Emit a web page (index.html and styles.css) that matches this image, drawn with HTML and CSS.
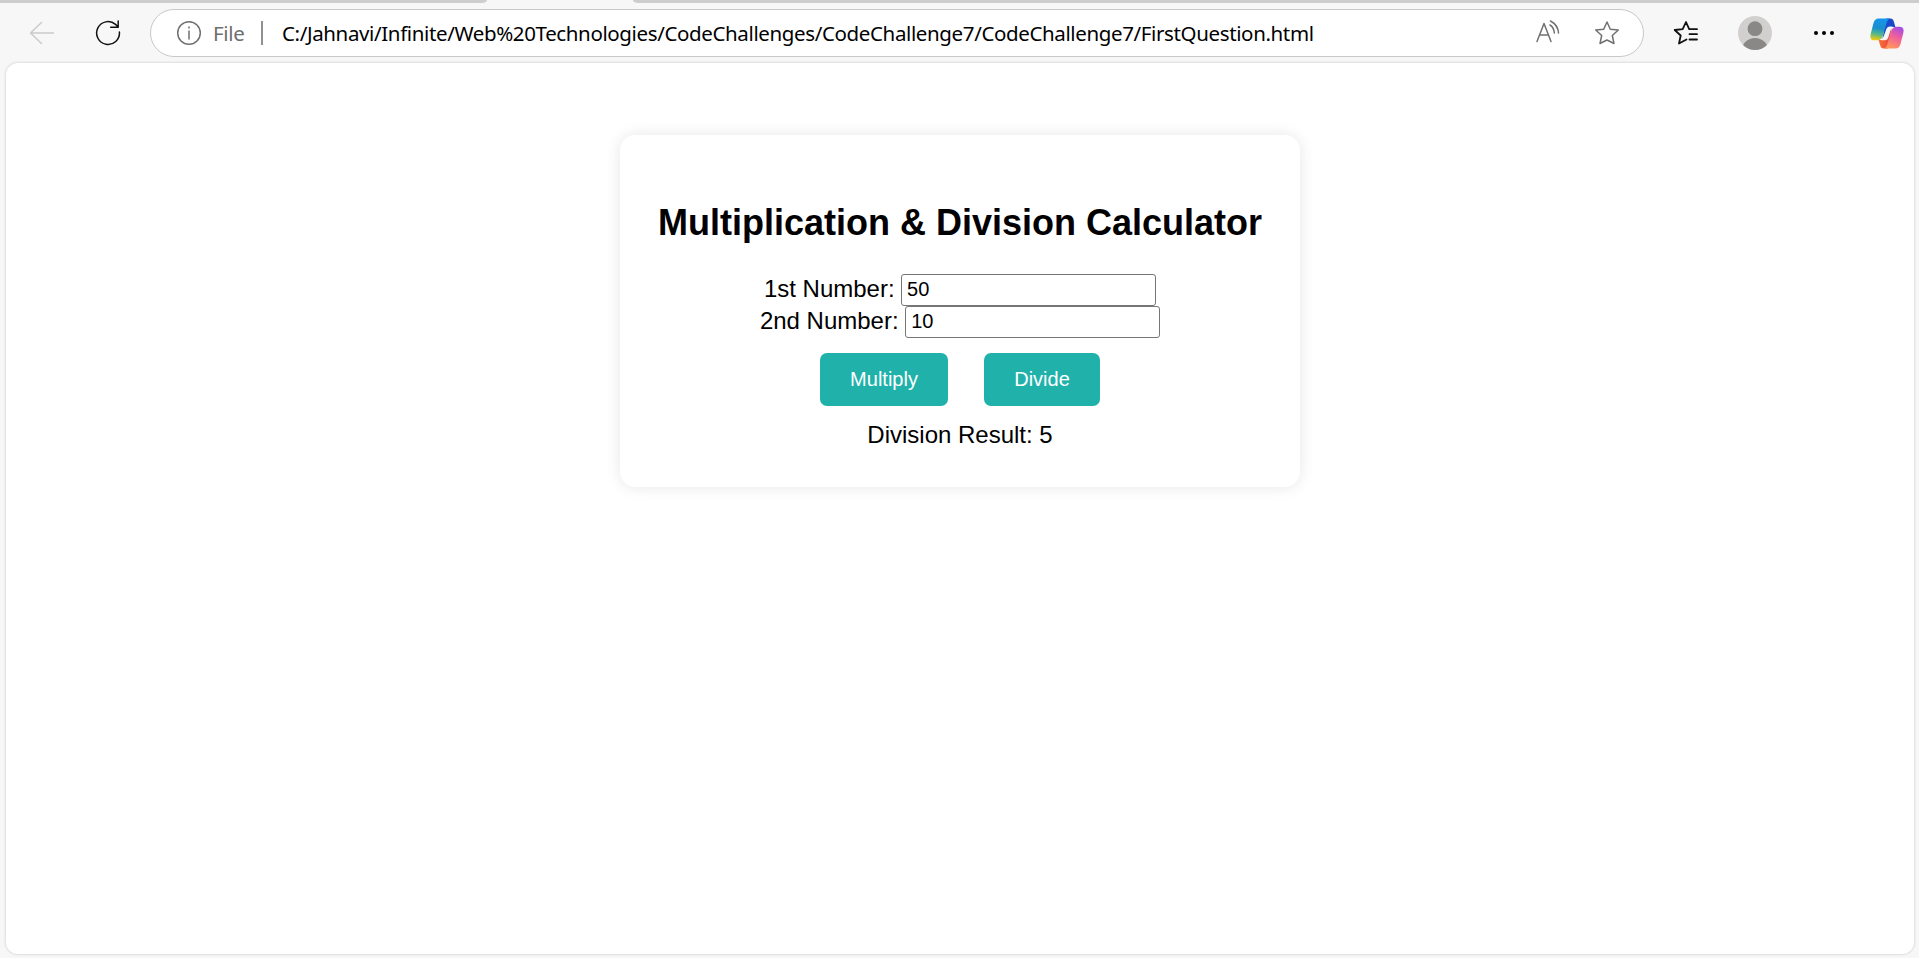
FILE: index.html
```html
<!DOCTYPE html>
<html lang="en">
<head>
<meta charset="utf-8">
<title>Multiplication &amp; Division Calculator</title>
<link rel="stylesheet" href="styles.css">
</head>
<body>
<div class="tabs"><div class="tab-left"></div><div class="tab-right"></div></div>
<header class="toolbar">
  <svg class="icon back" width="26" height="24" viewBox="0 0 26 24"><path d="M24.5 12H1.5M12.5 1.5L1.5 12l11 10.5"/></svg>
  <svg class="icon reload" width="26" height="26" viewBox="0 0 26 26"><path d="M24.4 12A11.4 11.4 0 1 1 20.5 4.4L23 6.8M23.2 1v6.300h-7.500"/></svg>
  <div class="address">
    <svg class="icon info" width="26" height="26" viewBox="0 0 26 26"><circle cx="13" cy="13" r="11.300"/><path d="M13 11v8M13 7v1"/></svg>
    <span class="scheme">File</span>
    <span class="divider"></span>
    <span class="url">C:/Jahnavi/Infinite/Web%20Technologies/CodeChallenges/CodeChallenge7/CodeChallenge7/FirstQuestion.html</span>
    <svg class="icon read" width="24" height="24" viewBox="0 0 24 24"><path d="M1 21.500L8 3.500l7 18M3.700 15h8.600M14 5q4 2.500 4.300 8M14.500 1q7.500 4 8 12"/></svg>
    <svg class="icon star" width="26" height="26" viewBox="0 0 26 26"><path d="M13 2l3.300 7.200 8 .8-6 5.500 1.700 8L13 20l-7 3.500 1.700-8-6-5.500 8-.8z"/></svg>
  </div>
  <svg class="icon favorites" width="26" height="26" viewBox="0 0 26 26"><path d="M24 9.200h-7.800L13 2 9.700 9.200l-8 .8 6 5.500-1.700 8 7.500-4M16.500 14.200H24M16.500 19.500H24"/></svg>
  <svg class="avatar" width="34" height="34" viewBox="0 0 34 34"><defs><clipPath id="disc"><circle cx="17" cy="17" r="17"/></clipPath></defs><g clip-path="url(#disc)"><path fill="#d2d0ce" d="M0 0h34v34H0z"/><circle cx="17" cy="12.700" r="7.400" fill="#8a8886"/><ellipse cx="17" cy="34" rx="13" ry="12" fill="#8a8886"/></g></svg>
  <svg class="more" width="22" height="6" viewBox="0 0 22 6"><circle cx="3" cy="3" r="2"/><circle cx="11" cy="3" r="2"/><circle cx="19" cy="3" r="2"/></svg>
  <svg class="copilot" width="34" height="31" viewBox="0 0 34 31">
    <defs>
      <linearGradient id="sea" x1=".5" y1="0" x2=".35" y2="1"><stop offset="0" stop-color="#1496ec"/><stop offset=".45" stop-color="#1b8fce"/><stop offset=".72" stop-color="#52b88a"/><stop offset="1" stop-color="#f2cc0b"/></linearGradient>
      <linearGradient id="sunset" x1=".8" y1="0" x2=".4" y2="1"><stop offset="0" stop-color="#a14ce8"/><stop offset=".45" stop-color="#ee5e9e"/><stop offset="1" stop-color="#ff965a"/></linearGradient>
      <linearGradient id="navy"><stop offset="0" stop-color="#1c4fd0"/><stop offset="1" stop-color="#1946c4"/></linearGradient>
      <linearGradient id="flame"><stop offset="0" stop-color="#f8733a"/><stop offset="1" stop-color="#e8403a"/></linearGradient>
    </defs>
    <path fill="url(#navy)" d="M16 .5h4.500q2.500 0 3.300 3l1.600 5.500h-4q-3 0-4 3l-5 9z"/>
    <path fill="url(#flame)" d="M18 30.500h-4.500q-2.500 0-3.300-3L8.600 22h4q3 0 4-3l5-9z"/>
    <path fill="url(#sea)" d="M8.500.5H20q-2.500.8-3.600 5l-3.500 12q-1.300 4.800-5.500 4.800H4.500Q-.7 22.300.7 16L3.500 5Q4.800.5 8.500.5z"/>
    <path fill="url(#sunset)" d="M25.500 30.500H14q2.500-.8 3.600-5l3.500-12q1.300-4.800 5.500-4.800h2.900q5.200 0 3.800 6.300L30.500 26q-1.300 4.500-5 4.500z"/>
    <path fill="#f7f7f7" d="M16.200 11.500q1-2.900 3.800-2.900h2.600q-1.700 1.500-2.300 4.200l-2 6.800q-.8 2.600-3.200 2.600h-4q1.700-1.200 2.300-3z"/>
  </svg>
</header>
<main class="page">
  <section class="card">
    <h2 class="title">Multiplication &amp; Division Calculator</h2>
    <div class="row"><label class="caption" for="first">1st Number:</label><input class="number" id="first" type="text" value="50"></div>
    <div class="row"><label class="caption" for="second">2nd Number:</label><input class="number" id="second" type="text" value="10"></div>
    <div class="actions"><button class="action multiply">Multiply</button><button class="action divide">Divide</button></div>
    <div class="result">Division Result: 5</div>
  </section>
</main>
</body>
</html>
```

FILE: styles.css
```css
* { box-sizing: border-box; }
body {
  margin: 0;
  height: 958px;
  overflow: hidden;
  display: flex;
  flex-direction: column;
  background: #f7f7f7;
  font-family: "Liberation Sans", Arial, sans-serif;
}
.tabs { display: flex; justify-content: space-between; height: 3px; flex: none; }
.tab-left { width: 487px; background: #cdcdcd; border-bottom-right-radius: 5px 3px; }
.tab-right { width: 1286px; background: #cdcdcd; border-bottom-left-radius: 5px 3px; }
.toolbar { display: flex; align-items: center; height: 60px; flex: none; padding: 0 15px 0 29px; }
.icon { flex: none; fill: none; stroke: #707070; stroke-width: 1.5; stroke-linejoin: round; stroke-linecap: round; }
.back { stroke: #cbcbcb; margin-top: -1px; }
.reload { stroke: #111; margin-left: 40px; }
.address {
  display: flex;
  align-items: center;
  width: 1494px;
  height: 48px;
  margin-left: 29px;
  padding: 0 23px 0 25px;
  border: 1px solid #c8c8c8;
  border-radius: 24px;
  background: #fff;
  font-family: "Noto Sans", sans-serif;
  font-size: 20.500px;
  white-space: nowrap;
}
.scheme { width: 48px; margin-left: 11px; color: #6e6e6e; letter-spacing: -.3px; }
.divider { width: 2px; height: 24px; background: #919191; }
.url { width: 1234px; margin-left: 19px; color: #000; letter-spacing: -.37px; }
.read { margin-left: 20px; margin-top: -2px; }
.star { margin-left: auto; }
.favorites { stroke: #111; stroke-width: 1.800; margin-left: 29px; }
.avatar { margin-left: 39px; }
.more { margin-left: 41px; }
.copilot { margin-left: auto; }
.page {
  flex: 1;
  margin: 0 5px 4px 6px;
  padding-top: 72px;
  background: #fff;
  border-radius: 12px;
  box-shadow: 0 0 2px 1px #dedede;
}
.card {
  width: 680px;
  height: 352px;
  margin: 0 auto;
  padding: 37px;
  border-radius: 15px;
  background: #fff;
  box-shadow: 0 0 15px rgba(0, 0, 0, .1);
  text-align: center;
  font-size: 24px;
}
.title { margin: 30px 0; font-size: 36px; line-height: 41px; padding-bottom: 1px; white-space: nowrap; }
.row { display: flex; justify-content: center; align-items: center; gap: 6.5px; height: 32px; }
.caption { padding-bottom: 2px; }
.number {
  width: 255px;
  height: 32px;
  padding: 0 5px 1px;
  border: 1px solid #767676;
  border-radius: 3px;
  background: #fff;
  font: 20px "Liberation Sans", Arial, sans-serif;
  color: #000;
}
.actions { display: flex; justify-content: center; gap: 36px; margin: 15px 0; }
.action {
  height: 53px;
  padding: 0;
  border: 0;
  border-radius: 7px;
  background: #20b2aa;
  color: #fff;
  font: 20px "Liberation Sans", Arial, sans-serif;
}
.multiply { width: 128px; }
.divide { width: 116px; }
.result { line-height: 27px; }
```
